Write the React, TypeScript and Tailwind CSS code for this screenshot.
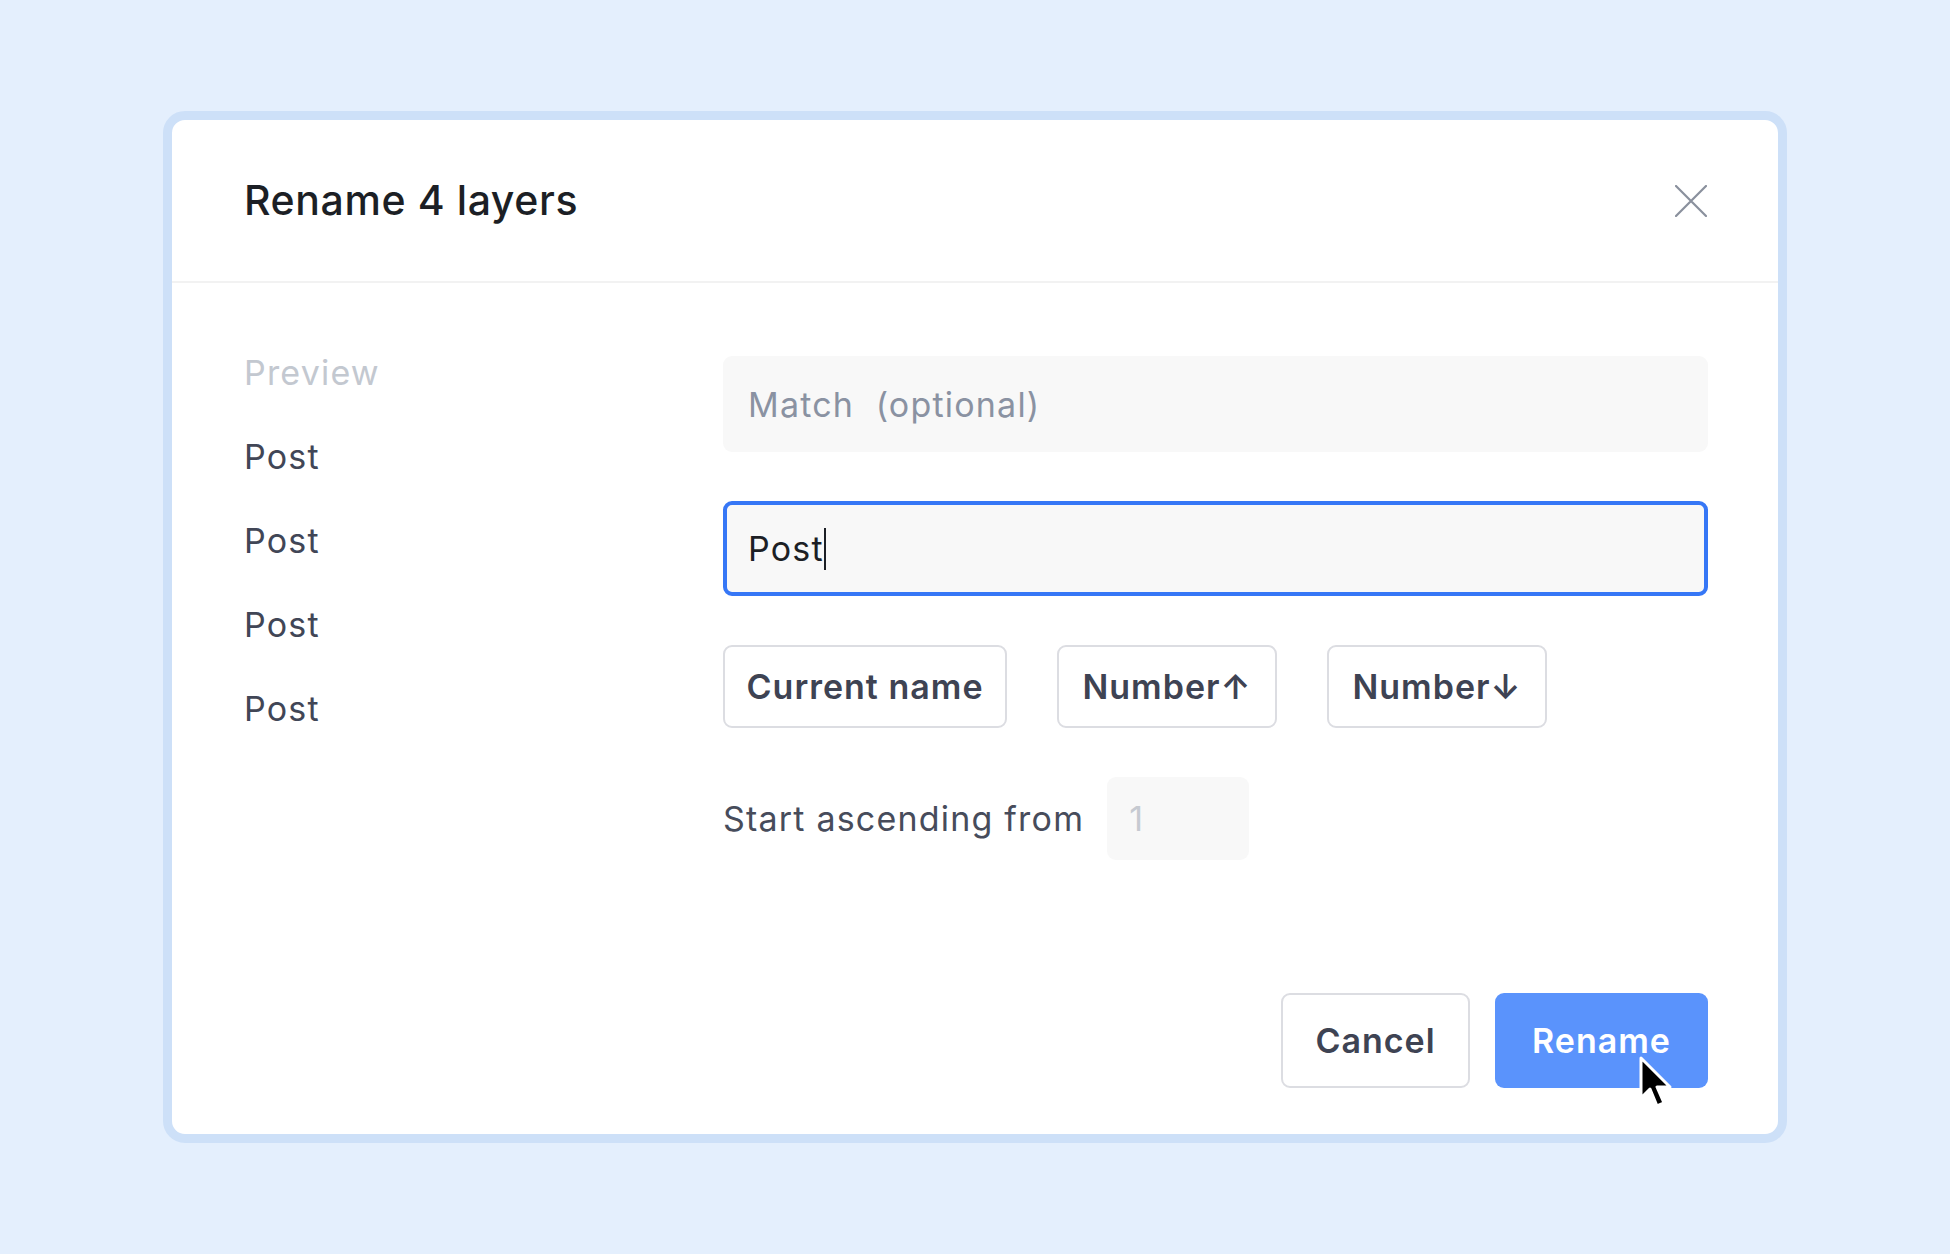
import React from 'react';

const font = { fontFamily: 'Inter, "Noto Sans", sans-serif' };

const CloseIcon: React.FC = () => (
  <svg width="32" height="32" viewBox="0 0 32 32" fill="none">
    <path d="M1 1 L31 31 M31 1 L1 31" stroke="#8a909d" strokeWidth="2.2" strokeLinecap="round" />
  </svg>
);

const Pointer: React.FC = () => (
  <svg width="36" height="56" viewBox="0 0 36 56" className="absolute left-[144px] top-[63px]">
    <path
      d="M2 2 L2 42 L11 33 L18 50 L25 47 L18 31 L31 31 Z"
      fill="#000"
      stroke="#fff"
      strokeWidth="3"
      strokeLinejoin="round"
    />
  </svg>
);

const previewNames = ['Post', 'Post', 'Post', 'Post'];

export default function App() {
  return (
    <div className="min-h-screen w-full bg-[#e4effd] flex items-center justify-center" style={font}>
      <div className="w-[1624px] h-[1032px] rounded-[22px] border-[9px] border-[#cde0f8] bg-white flex flex-col overflow-hidden">
        {/* header */}
        <div className="h-[163px] shrink-0 flex items-center justify-between pl-[72px] pr-[71px] border-b-2 border-[#f2f2f2]">
          <h1 className="text-[41px] font-medium text-[#1c1f25] leading-none tracking-[0.6px]">Rename 4 layers</h1>
          <button className="w-[32px] h-[32px] flex items-center justify-center">
            <CloseIcon />
          </button>
        </div>

        {/* body */}
        <div className="flex-1 flex flex-col pl-[72px] pr-[70px] pt-[73px] pb-[46px] text-[34px] tracking-[1.2px]">
          <div className="flex">
            <div className="w-[479px] shrink-0 flex flex-col gap-[44px] leading-[40px] -mt-[3px]">
              <div className="text-[#c3c8d0]">Preview</div>
              {previewNames.map((name, i) => (
                <div key={i} className="text-[#414656]">{name}</div>
              ))}
            </div>

            <div className="flex-1 flex flex-col gap-[49px]">
              <div className="h-[96px] rounded-[9px] bg-[#f8f8f8] flex items-center px-[25px] text-[#8a92a2]">
                Match&nbsp;&nbsp;(optional)
              </div>

              <div className="h-[95px] rounded-[9px] bg-[#f8f8f8] border-[4px] border-[#3677f6] flex items-center px-[21px] text-[#1c1f25]">
                <span>Post</span>
                <span className="w-[2px] h-[42px] bg-[#1c1f25]"></span>
              </div>

              <div className="flex gap-[50px]">
                <button className="w-[284px] h-[83px] rounded-[9px] border-2 border-[#dcdde2] bg-white font-semibold tracking-[1px] text-[#3e4353]">
                  Current name
                </button>
                <button className="w-[220px] h-[83px] rounded-[9px] border-2 border-[#dcdde2] bg-white font-semibold tracking-[1px] text-[#3e4353]">
                  Number↑
                </button>
                <button className="w-[220px] h-[83px] rounded-[9px] border-2 border-[#dcdde2] bg-white font-semibold tracking-[1px] text-[#3e4353]">
                  Number↓
                </button>
              </div>

              <div className="flex items-center gap-[23px]">
                <span className="text-[#474c5b]">Start ascending from</span>
                <div className="w-[142px] h-[83px] rounded-[9px] bg-[#f8f8f8] flex items-center px-[22px] text-[#c6cad1]">
                  1
                </div>
              </div>
            </div>
          </div>

          {/* footer */}
          <div className="mt-auto flex justify-end gap-[25px]">
            <button className="w-[189px] h-[95px] rounded-[9px] border-2 border-[#dcdde2] bg-white font-semibold tracking-[1px] text-[#3e4353]">
              Cancel
            </button>
            <div className="relative">
              <button className="w-[213px] h-[95px] rounded-[9px] bg-[#5a93fc] font-semibold tracking-[1px] text-white">
                Rename
              </button>
              <Pointer />
            </div>
          </div>
        </div>
      </div>
    </div>
  );
}
